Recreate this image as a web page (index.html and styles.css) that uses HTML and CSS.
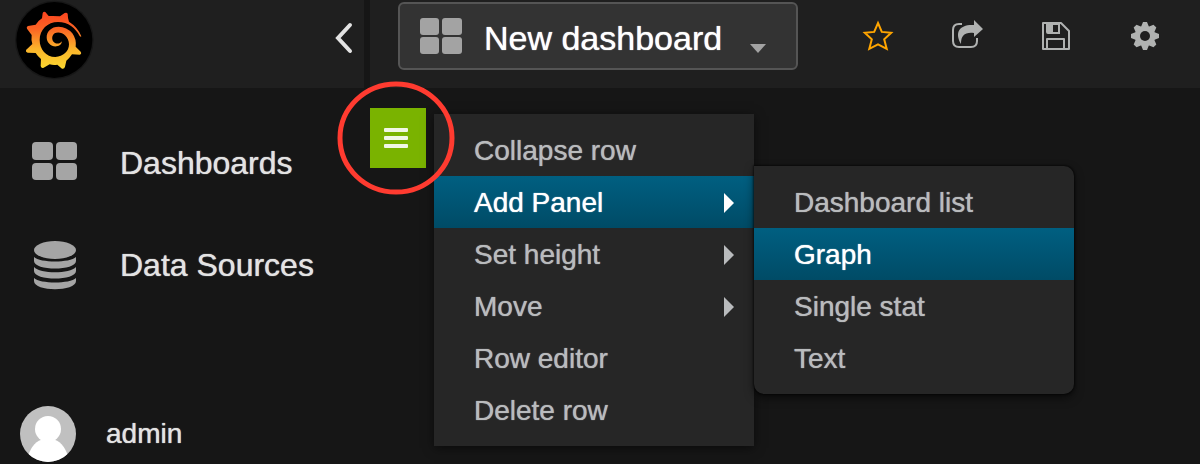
FILE: index.html
```html
<!DOCTYPE html>
<html lang="en">
<head>
<meta charset="utf-8">
<title>New dashboard</title>
<link rel="stylesheet" href="styles.css">
</head>
<body>
<div class="app">
  <aside class="sidebar">
    <div class="sidebar-top">
      <a class="logo" href="#" aria-label="Home">
        <svg viewBox="42 0 240 240" width="80" height="80">
          <defs>
            <linearGradient id="flame" x1="0" y1="36" x2="0" y2="206" gradientUnits="userSpaceOnUse">
              <stop offset="0" stop-color="#fb4420"/>
              <stop offset=".3" stop-color="#fb6424"/>
              <stop offset=".65" stop-color="#fbb42b"/>
              <stop offset="1" stop-color="#fbd72f"/>
            </linearGradient>
          </defs>
          <circle cx="163" cy="120" r="118" fill="#171717"/>
          <circle cx="163" cy="120" r="114" fill="#000"/>
          <path fill="url(#flame)" d="M244 109Q234 82 207 65Q203 52 203 41Q200 36 194 39L180 49Q163 47 146 48L136 36Q129 33 128 40L126 55Q115 62 107 74L84 78Q78 80 81 86L95 105Q93 120 97 132L78 150Q76 156 83 158L107 159Q113 169 123 177L122 198Q124 206 131 203L149 193Q160 196 172 194L186 206Q193 208 195 200L199 182Q209 174 216 163L239 164Q246 162 242 155L227 140Q230 118 217 100Q200 80 176 80C153 80 140 95 140 112C140 130 155 141 170 139Q184 137 186 124C180 132 171 132 165 129C154 123 154 107 164 100C180 91 207 106 207 133C207 154 190 170 166 171C138 171 119 148 119 120C119 89 143 66 174 66C205 66 226 84 239 108Q243 112 244 109Z"/>
        </svg>
      </a>
      <button class="collapse" type="button" aria-label="Collapse menu">
        <svg viewBox="0 0 20 32" width="20" height="32"><path d="M16 3L4 16L16 29" fill="none" stroke="#e3e3e3" stroke-width="4" stroke-linecap="round"/></svg>
      </button>
    </div>
    <nav class="nav">
      <a class="nav-item" href="#">
        <svg class="nav-icon" viewBox="0 2 46 40" width="46" height="40" fill="#a5a5a5"><rect x="0" y="1" width="21" height="18" rx="4"/><rect x="24" y="1" width="21" height="18" rx="4"/><rect x="0" y="22" width="21" height="17" rx="4"/><rect x="24" y="22" width="21" height="17" rx="4"/></svg>
        Dashboards
      </a>
      <a class="nav-item" href="#">
        <svg class="nav-icon" viewBox="0 0 46 50" width="46" height="50" fill="#a5a5a5"><ellipse cx="23" cy="10" rx="21" ry="9"/><path d="M2 17C8 23 38 23 44 17V21C44 31 2 31 2 21ZM2 27C8 34 38 34 44 27V31C44 41 2 41 2 31ZM2 38C8 44 38 44 44 38V41C44 52 2 52 2 41Z"/></svg>
        Data Sources
      </a>
    </nav>
    <a class="user" href="#">
      <svg viewBox="0 0 56 56" width="56" height="56"><defs><clipPath id="disc"><circle cx="28" cy="28" r="28"/></clipPath></defs><g clip-path="url(#disc)"><path d="M0 0H56V56H0Z" fill="#c0c0c0"/><circle cx="28" cy="23" r="13" fill="#fff"/><path d="M8 50Q13 35 24 33H32Q43 35 48 50L42 56H14Z" fill="#fff"/></g></svg>
      admin
    </a>
  </aside>

  <main class="main">
    <header class="topbar">
      <button class="picker" type="button">
        <svg viewBox="0 0 42 36" width="42" height="36" fill="#a3a3a3"><rect width="19" height="17" rx="3"/><rect x="22" width="20" height="17" rx="3"/><rect y="19" width="19" height="17" rx="3"/><rect x="22" y="19" width="20" height="17" rx="3"/></svg>
        <span class="picker-title">New dashboard</span>
        <svg class="caret" viewBox="0 0 16 9" width="16" height="9"><path d="M0 0H16L8 9Z" fill="#a3a3a3"/></svg>
      </button>
      <div class="tools">
        <button class="tool" type="button" aria-label="Star">
          <svg viewBox="0 0 30 30" width="30" height="30"><path d="M15 2L18.8 10.9L28.2 11.7L21.2 18.3L23.7 27.8L15 23.3L6.3 27.8L8.8 18.3L1.8 11.7L11.2 10.9Z" fill="none" stroke="#ffa500" stroke-width="2"/></svg>
        </button>
        <button class="tool" type="button" aria-label="Share">
          <svg viewBox="0 0 30 30" width="30" height="30"><path d="M10 3H7Q1 3 1 9V20Q1 26 7 26H19Q25 26 25 20V17" fill="none" stroke="#b0b2b1" stroke-width="2"/><path d="M22 -1L31 8L22 16V12C13 11 9 14 9 23C2 11 8 3 22 4Z" fill="#b0b2b1"/></svg>
        </button>
        <button class="tool" type="button" aria-label="Save">
          <svg viewBox="0 0 30 30" width="30" height="30"><path d="M2 2H20L28 10V28H2ZM6 28V18H23V28" fill="none" stroke="#b0b2b1" stroke-width="2" stroke-linejoin="round"/><path fill-rule="evenodd" fill="#b0b2b1" d="M5 2H19V13H7Q5 13 5 11ZM12 4V11H17V4Z"/></svg>
        </button>
        <button class="tool" type="button" aria-label="Settings">
          <svg viewBox="0 0 30 30" width="30" height="30"><g fill="#b0b2b1"><path id="teeth" d="M11 6L13 1H17L19 6V24L17 29H13L11 24Z"/><use href="#teeth" transform="rotate(45 15 15)"/><use href="#teeth" transform="rotate(90 15 15)"/><use href="#teeth" transform="rotate(135 15 15)"/><circle cx="15" cy="15" r="10"/></g><circle cx="15" cy="15" r="5" fill="#1f1f1f"/></svg>
        </button>
      </div>
    </header>
    <section class="row">
      <button class="row-button" type="button" aria-label="Row menu">
        <svg viewBox="0 0 24 20" width="24" height="20" fill="#f1f7e5"><rect width="24" height="4" rx="1"/><rect y="8" width="24" height="4" rx="1"/><rect y="16" width="24" height="4" rx="1"/></svg>
      </button>
      <div class="menu row-menu">
        <button class="item" type="button">Collapse row</button>
        <button class="item active" type="button">Add Panel<span class="arrow"></span></button>
        <button class="item" type="button">Set height<span class="arrow"></span></button>
        <button class="item" type="button">Move<span class="arrow"></span></button>
        <button class="item" type="button">Row editor</button>
        <button class="item" type="button">Delete row</button>
        <div class="menu submenu">
          <button class="item" type="button">Dashboard list</button>
          <button class="item active" type="button">Graph</button>
          <button class="item" type="button">Single stat</button>
          <button class="item" type="button">Text</button>
        </div>
      </div>
      <svg class="highlight" viewBox="0 0 118 114" width="118" height="114"><ellipse cx="59" cy="57" rx="56" ry="54" fill="none" stroke="#ff3b30" stroke-width="5"/></svg>
    </section>
  </main>
</div>
</body>
</html>
```
FILE: styles.css
```css
* {
  box-sizing: border-box;
}

body {
  margin: 0;
  background: #161616;
  color: #e3e3e3;
  font-family: "Liberation Sans", Arial, sans-serif;
  font-size: 28px;
  overflow: hidden;
}

button {
  margin: 0;
  padding: 0;
  border: 0;
  background: none;
  color: inherit;
  font: inherit;
  cursor: pointer;
}

a {
  color: inherit;
  text-decoration: none;
}

svg {
  display: block;
  flex: none;
  overflow: visible;
}

.app {
  display: grid;
  grid-template-columns: 364px 1fr;
  column-gap: 6px;
  min-height: 100vh;
}

.sidebar-top,
.topbar {
  display: flex;
  height: 88px;
  background: #1f1f1f;
}

.sidebar-top {
  justify-content: space-between;
  padding: 0 10px 0 14px;
}

.collapse {
  align-self: flex-start;
  margin-top: 22px;
}

.nav {
  padding: 24px 0 0 32px;
}

.nav-item {
  display: flex;
  align-items: center;
  gap: 42px;
  height: 102px;
  font-size: 32px;
  text-shadow: 0 0 1px #e3e3e3;
}

.user {
  display: flex;
  align-items: center;
  gap: 30px;
  margin-top: 90px;
  padding-left: 20px;
  text-shadow: 0 0 1px #e3e3e3;
}

.topbar {
  align-items: flex-start;
  justify-content: space-between;
  padding: 2px 40px 0 28px;
}

.picker {
  display: flex;
  align-items: center;
  width: 400px;
  height: 68px;
  padding: 0 30px 0 20px;
  border: 2px solid #555;
  border-radius: 6px;
  background: #333;
  color: #fff;
  font-size: 34px;
  text-shadow: 0 0 1px #fff;
}

.picker-title {
  margin: 0 auto 0 22px;
  padding-top: 4px;
}

.caret {
  margin-top: 24px;
}

.tools {
  display: flex;
  gap: 59px;
  padding-top: 19px;
}

.row {
  position: relative;
  padding-top: 20px;
}

.row-button {
  display: grid;
  place-items: center;
  width: 56px;
  height: 60px;
  padding-right: 4px;
  background: #7ab300;
}

.menu {
  position: absolute;
  width: 320px;
  padding: 10px 0;
  background: #262626;
  box-shadow: 0 2px 10px #0008;
}

.row-menu {
  top: 26px;
  left: 64px;
}

.submenu {
  top: 52px;
  left: 100%;
  border-radius: 0 10px 10px 10px;
  box-shadow: 0 0 2px 1px #0008, 0 4px 10px #0008;
}

.item {
  display: flex;
  align-items: center;
  justify-content: space-between;
  width: 100%;
  height: 52px;
  padding: 1px 20px 0 40px;
  color: #b9bbbd;
  text-align: left;
  text-shadow: 0 0 1px #b9bbbd;
}

.active {
  background: linear-gradient(#005f81, #004b66);
  color: #fff;
  text-shadow: 0 0 1px #fff;
}

.arrow {
  border-top: 10px solid transparent;
  border-bottom: 10px solid transparent;
  border-left: 10px solid;
}

.highlight {
  position: absolute;
  top: -7px;
  left: -33px;
  pointer-events: none;
}
```
